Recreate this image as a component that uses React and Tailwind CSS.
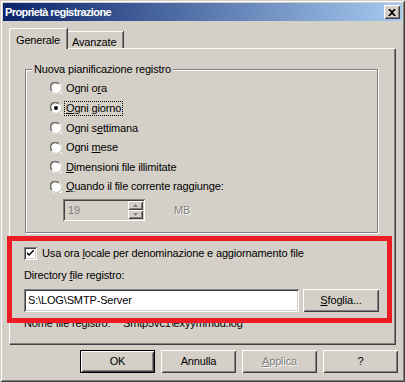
import React from "react";

const raised =
  "shadow-[inset_1px_1px_0_#ffffff,inset_-1px_-1px_0_#404040,inset_2px_2px_0_#d4d0c8,inset_-2px_-2px_0_#808080]";
const sunken =
  "shadow-[inset_1px_1px_0_#808080,inset_-1px_-1px_0_#ffffff,inset_2px_2px_0_#404040,inset_-2px_-2px_0_#d4d0c8]";

function U({ children }) {
  return <span className="underline underline-offset-[1px]">{children}</span>;
}

function Radio({ checked }) {
  return (
    <svg width="12" height="12" viewBox="0 0 12 12" className="shrink-0">
      <circle cx="6" cy="6" r="5" fill="#fff" />
      <path d="M1.2 9 A5 5 0 0 1 9 1.2" fill="none" stroke="#808080" strokeWidth="1" />
      <path d="M2 8.5 A4.3 4.3 0 0 1 8.5 2" fill="none" stroke="#404040" strokeWidth="1" />
      <path d="M3 11.2 A5.5 5.5 0 0 0 11.2 3" fill="none" stroke="#ffffff" strokeWidth="1.2" />
      <path d="M3 10.2 A4.5 4.5 0 0 0 10.2 3" fill="none" stroke="#d4d0c8" strokeWidth="1" />
      {checked && <circle cx="6" cy="6" r="2" fill="#000" />}
    </svg>
  );
}

function RadioRow({ h, checked, focus, children }) {
  return (
    <div className={`flex items-center ${h}`}>
      <div className="ml-[24px]">
        <Radio checked={checked} />
      </div>
      <span
        className={`ml-[3px] px-[1px] leading-[13px] ${
          focus ? "outline-1 outline-dotted outline-black" : ""
        }`}
      >
        {children}
      </span>
    </div>
  );
}

function Btn({ children, w = "w-[75px]", def = false }) {
  return (
    <div
      className={`${w} h-[23px] flex items-center justify-center bg-[#d4d0c8] ${raised} ${
        def ? "border border-black" : ""
      }`}
    >
      {children}
    </div>
  );
}

export default function App() {
  return (
    <div
      className="relative w-[405px] h-[382px] bg-[#d4d0c8] p-[3px] text-[11px] tracking-[-0.15px] text-black shadow-[inset_1px_1px_0_#d4d0c8,inset_-1px_-1px_0_#404040,inset_2px_2px_0_#ffffff,inset_-2px_-2px_0_#808080]"
      style={{ fontFamily: "Tahoma, 'Liberation Sans', Arial, sans-serif" }}
    >
      {/* title bar */}
      <div className="h-[18px] flex items-center bg-[linear-gradient(to_right,#0a246a,#a6caf0)] pl-[2px] pr-[2px]">
        <span className="text-white font-bold text-[11px] tracking-[-0.6px] leading-none">
          Proprietà registrazione
        </span>
        <div className={`ml-auto w-[16px] h-[14px] bg-[#d4d0c8] flex items-center justify-center ${raised}`}>
          <svg width="8" height="7" viewBox="0 0 8 7">
            <path d="M0 0 L2 0 L4 2 L6 0 L8 0 L5 3.5 L8 7 L6 7 L4 5 L2 7 L0 7 L3 3.5 Z" fill="#000" />
          </svg>
        </div>
      </div>

      {/* tabs */}
      <div className="pl-[6px] pt-[7px]">
        <div className="flex items-end h-[20px]">
          <div className="relative z-10 w-[58px] h-[21px] -mb-px bg-[#d4d0c8] border-t border-l border-white rounded-tl-[2px] shadow-[1px_0_0_#404040,inset_-1px_0_0_#808080] flex pl-[6px] pt-[3px]">
            Generale
          </div>
          <div className="w-[56px] h-[17px] bg-[#d4d0c8] border-t border-white shadow-[1px_0_0_#404040,inset_-1px_0_0_#808080] pl-[5px] pt-[2px]">
            Avanzate
          </div>
        </div>

        {/* panel */}
        <div className="w-[386px] h-[296px] border-t border-l border-white shadow-[1px_1px_0_#404040,inset_-1px_-1px_0_#808080] pl-[15px] pt-[20px]">
          {/* group box */}
          <div className="relative w-[353px] h-[164px] border border-[#808080] shadow-[1px_1px_0_#ffffff,inset_1px_1px_0_#ffffff] pt-[8px]">
            <span className="absolute left-[6px] -top-[8px] bg-[#d4d0c8] px-[2px] leading-[14px]">
              Nuova pianificazione registro
            </span>
            <RadioRow h="h-[20px]">
              Ogni o<U>r</U>a
            </RadioRow>
            <RadioRow h="h-[20px]" checked focus>
              <U>O</U>gni giorno
            </RadioRow>
            <RadioRow h="h-[20px]">
              Ogni s<U>e</U>ttimana
            </RadioRow>
            <RadioRow h="h-[19px]">
              Ogni <U>m</U>ese
            </RadioRow>
            <RadioRow h="h-[20px]">
              <U>D</U>imensioni file illimitate
            </RadioRow>
            <RadioRow h="h-[19px]">
              <U>Q</U>uando il file corrente raggiunge:
            </RadioRow>
            <div className="flex items-center mt-[3px] ml-[37px]">
              <div className={`relative w-[82px] h-[22px] bg-[#d4d0c8] ${sunken} flex items-center pl-[5px] text-[#808080]`}>
                19
                <div className="absolute right-[2px] top-[2px] flex flex-col">
                  <div className={`w-[15px] h-[9px] ${raised} flex items-center justify-center`}>
                    <svg width="5" height="3" viewBox="0 0 5 3">
                      <path d="M2.5 0 L5 3 L0 3 Z" fill="#808080" />
                    </svg>
                  </div>
                  <div className={`w-[15px] h-[9px] ${raised} flex items-center justify-center`}>
                    <svg width="5" height="3" viewBox="0 0 5 3">
                      <path d="M0 0 L5 0 L2.5 3 Z" fill="#808080" />
                    </svg>
                  </div>
                </div>
              </div>
              <span className="ml-[29px] text-[#808080] [text-shadow:1px_1px_0_#fff]">MB</span>
            </div>
          </div>

          {/* checkbox */}
          <div className="flex items-center mt-[14px] ml-[-1px] h-[13px]">
            <div className={`w-[13px] h-[13px] bg-white ${sunken} flex items-center justify-center`}>
              <svg width="7" height="7" viewBox="0 0 7 7">
                <path d="M0 2 L0 4 L2 6 L7 1 L7 -1 L2 4 Z" fill="#000" />
              </svg>
            </div>
            <span className="ml-[5px]">
              Usa ora <U>l</U>ocale per denominazione e aggiornamento file
            </span>
          </div>

          <div className="mt-[8px] ml-[-1px] leading-[14px]">
            Directory <U>f</U>ile registro:
          </div>

          <div className="flex items-center mt-[7px] ml-[-1px] gap-[4px]">
            <div className={`w-[275px] h-[23px] bg-white ${sunken} flex items-center pl-[4px]`}>
              S:\LOG\SMTP-Server
            </div>
            <Btn w="w-[76px]">
              <U>S</U>foglia...
            </Btn>
          </div>

          <div className="flex mt-[4px] ml-[-1px] leading-[14px]">
            <span className="w-[99px]">Nome file registro:</span>
            <span>Smtp5vc1\exyymmdd.log</span>
          </div>
        </div>
      </div>

      {/* bottom buttons */}
      <div className="flex justify-end gap-[6px] mt-[6px] pr-[4px]">
        <Btn def>OK</Btn>
        <Btn>Annulla</Btn>
        <Btn>
          <span className="text-[#808080] [text-shadow:1px_1px_0_#fff]">
            <U>A</U>pplica
          </span>
        </Btn>
        <Btn>?</Btn>
      </div>

      {/* annotation overlay */}
      <div className="absolute left-[7px] top-[236px] w-[385px] h-[87px] border-[5px] border-[#ed1c24] pointer-events-none" />
    </div>
  );
}
